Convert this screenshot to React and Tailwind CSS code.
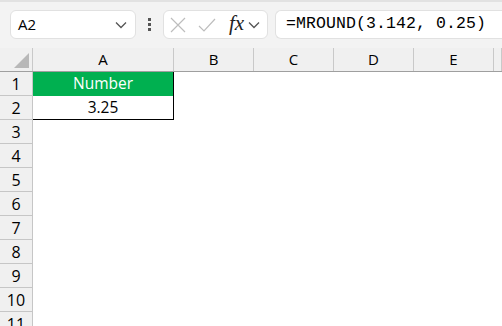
import React from 'react';

const cols = [
  { label: 'A', w: 'w-[141px]' },
  { label: 'B', w: 'w-[80px]' },
  { label: 'C', w: 'w-[80px]' },
  { label: 'D', w: 'w-[80px]' },
  { label: 'E', w: 'w-[80px]' },
  { label: '', w: 'flex-1' },
];

const rows = [1, 2, 3, 4, 5, 6, 7, 8, 9, 10, 11];

const Chevron = () => (
  <svg width="12" height="8" viewBox="0 0 12 8" fill="none" stroke="#555" strokeWidth="1.3">
    <path d="M1 1.5 L6 6.5 L11 1.5" />
  </svg>
);

const App = () => {
  return (
    <div className="w-[502px] h-[326px] overflow-hidden bg-white font-['Open_Sans','Liberation_Sans',sans-serif] text-black">
      {/* toolbar */}
      <div className="h-[48px] bg-[#f3f3f3] border-t-[2px] border-[#e2e2e2] flex items-start pt-[8px]">
        <div className="ml-[10px] w-[126px] h-[29px] bg-white border border-[#e1e1e1] rounded-[6px] flex items-center justify-between pl-[7px] pr-[8px]">
          <span className="text-[15px] leading-none">A2</span>
          <Chevron />
        </div>
        <div className="w-[27px] h-[29px] flex flex-col items-center justify-center gap-[2px]">
          <span className="w-[3px] h-[3px] bg-[#555]" />
          <span className="w-[3px] h-[3px] bg-[#555]" />
          <span className="w-[3px] h-[3px] bg-[#555]" />
        </div>
        <div className="w-[105px] h-[29px] bg-white border border-[#e1e1e1] rounded-[6px] flex items-center pl-[6px]">
          <svg width="16" height="16" viewBox="0 0 16 16" fill="none" stroke="#bdbdbd" strokeWidth="1.2">
            <path d="M1 1 L15 15 M15 1 L1 15" />
          </svg>
          <svg className="ml-[12px]" width="18" height="16" viewBox="0 0 18 16" fill="none" stroke="#bdbdbd" strokeWidth="1.2">
            <path d="M1 9 L6 14 L17 2" />
          </svg>
          <span className="ml-[13px] font-['Liberation_Serif',serif] italic text-[21px] leading-none text-[#222] -mt-[3px]">fx</span>
          <span className="ml-[4px] mt-[1px]"><Chevron /></span>
        </div>
        <div className="ml-[7px] flex-1 h-[29px] bg-white border border-[#e1e1e1] border-r-0 rounded-l-[6px] flex items-center pl-[10px]">
          <span className="font-['Liberation_Mono',monospace] text-[16.5px] leading-none tracking-[0.1px]">=MROUND(3.142, 0.25)</span>
        </div>
      </div>

      {/* column headers */}
      <div className="flex h-[24px] bg-[#f0f0f0] border-b border-[#9f9f9f]">
        <div className="w-[33px] shrink-0 relative border-r border-[#c9c9c9]">
          <svg className="absolute right-[3px] bottom-[3px]" width="15" height="15" viewBox="0 0 15 15">
            <path d="M15 0 L15 15 L0 15 Z" fill="#b8b8b8" />
          </svg>
        </div>
        {cols.map((c, i) => (
          <div
            key={i}
            className={`${c.w} shrink-0 flex items-center justify-center text-[15px] leading-none border-r border-[#c9c9c9]`}
          >
            {c.label}
          </div>
        ))}
      </div>

      {/* rows */}
      {rows.map((r) => (
        <div key={r} className="flex h-[24px]">
          <div className="w-[33px] shrink-0 bg-[#f0f0f0] border-r border-b border-[#c6c6c6] flex items-center justify-center text-[16px] leading-none">
            {r}
          </div>
          {r === 1 && (
            <div className="w-[141px] shrink-0 bg-[#00b050] text-white flex items-center justify-center text-[15.5px] leading-none border-r border-black">
              Number
            </div>
          )}
          {r === 2 && (
            <div className="w-[141px] shrink-0 bg-white flex items-center justify-center text-[15.5px] leading-none border-r border-b border-black">
              3.25
            </div>
          )}
          <div className="flex-1 bg-white" />
        </div>
      ))}
    </div>
  );
};

export default App;
